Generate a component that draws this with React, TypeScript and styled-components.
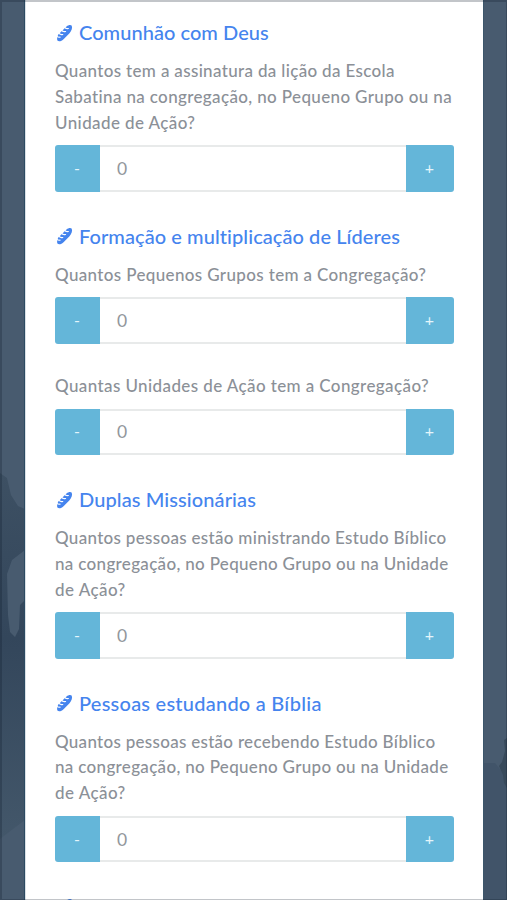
import React, { useState } from "react";
import styled, { createGlobalStyle } from "styled-components";

const GlobalStyle = createGlobalStyle`
  * { box-sizing: border-box; }
  html, body { margin: 0; height: 100%; overflow: hidden; }
  body { font-family: Lato, sans-serif; font-variant-ligatures: none; }
`;

const Page = styled.div`
  position: relative;
  height: 900px;
  display: grid;
  grid-template-columns: 25px 458px 24px;
  overflow: hidden;
  background: #485b6f;
`;

const Frame = styled.div`
  position: absolute;
  inset: 0;
  pointer-events: none;
  border: solid rgba(10, 22, 38, 0.25);
  border-width: 2px 1px 1px 2px;
`;

const Side = styled.svg`
  display: block;
  width: 100%;
  height: 900px;
`;

const Card = styled.main`
  height: 900px;
  overflow: hidden;
  padding: 20.5px 29px 0 30px;
  background: #fff;
  box-shadow: inset 1px 0 #d9e0e6;
`;

const Section = styled.section<{ $height: number }>`
  height: ${(p) => p.$height}px;
`;

const Title = styled.h2`
  display: flex;
  align-items: center;
  height: 25px;
  margin: 0 0 12.7px;
  color: #4584ee;
  font-size: 20px;
  font-weight: 500;
  line-height: 24px;
`;

const TitleIcon = styled.svg`
  width: 17px;
  height: 18px;
  margin: 0 6.5px 1px 0.5px;
  flex: none;
`;

const TitleText = styled.span<{ $spacing: number }>`
  padding-bottom: 2px;
  white-space: nowrap;
  letter-spacing: ${(p) => p.$spacing}px;
`;

const Field = styled.div`
  & + & { margin-top: 29px; }
`;

const Question = styled.label`
  display: block;
  margin-bottom: 10px;
  color: #8b9097;
  font-size: 17px;
  font-weight: 500;
  line-height: 25.7px;
`;

const Line = styled.span<{ $spacing: number }>`
  display: block;
  width: max-content;
  white-space: nowrap;
  letter-spacing: ${(p) => p.$spacing}px;
`;

const Stepper = styled.div`
  display: grid;
  grid-template-columns: 45px 1fr 48px;
  height: 46.5px;
  border-radius: 3px;
  overflow: hidden;
`;

const StepButton = styled.button`
  border: 0;
  padding: 0 1px 2px 0;
  background: #64b6d9;
  color: #e4f5fb;
  font: 16px Lato, sans-serif;
`;

const Value = styled.input`
  min-width: 0;
  width: 100%;
  border: solid #e8eaea;
  border-width: 2px 0;
  padding: 0 17px;
  outline: 0;
  background: #fff;
  color: #92979c;
  font: 17.5px Lato, sans-serif;
`;

function BreadIcon() {
  return (
    <TitleIcon viewBox="0 0 17 18" fill="none">
      <path d="M15.6 1.6C16.8 3.7 15.6 6.8 13.5 9.2L7.8 14.9C5.8 17 3 17.8 1.6 16.7C.7 15.3 1 12.7 2.3 10.5L10.5 2.5C12.2 1.1 14.6.6 15.6 1.6Z" fill="#4584ee" />
      <path d="M8.5 2.7C9.2 4.3 10.7 4.9 12.4 4.5M5.4 5.7C6.2 7.3 7.7 8 9.6 7.5M2.5 8.6C3.3 10.3 4.8 11 6.8 10.5M.4 11.6C1 12.9 2.4 13.5 4.1 13.1" stroke="#fff" strokeWidth="1.1" strokeLinecap="round" />
    </TitleIcon>
  );
}

type Text = [string, number];

const sections: { title: Text; height: number; fields: Text[][] }[] = [
  {
    title: ["Comunhão com Deus", 0.05],
    height: 203.5,
    fields: [[["Quantos tem a assinatura da lição da Escola", 0.34], ["Sabatina na congregação, no Pequeno Grupo ou na", 0.36], ["Unidade de Ação?", 0.4]]],
  },
  {
    title: ["Formação e multiplicação de Líderes", 0.07],
    height: 263.5,
    fields: [[["Quantos Pequenos Grupos tem a Congregação?", 0.36]], [["Quantas Unidades de Ação tem a Congregação?", 0.4]]],
  },
  {
    title: ["Duplas Missionárias", 0.1],
    height: 203.5,
    fields: [[["Quantos pessoas estão ministrando Estudo Bíblico", 0.31], ["na congregação, no Pequeno Grupo ou na Unidade", 0.32], ["de Ação?", 0.45]]],
  },
  {
    title: ["Pessoas estudando a Bíblia", 0.24],
    height: 203.5,
    fields: [[["Quantos pessoas estão recebendo Estudo Bíblico", 0.29], ["na congregação, no Pequeno Grupo ou na Unidade", 0.32], ["de Ação?", 0.45]]],
  },
  { title: ["Escola Pessoal", 0], height: 203.5, fields: [] },
];

function Counter() {
  const [value, setValue] = useState(0);
  return (
    <Stepper>
      <StepButton onClick={() => setValue(Math.max(0, value - 1))}>-</StepButton>
      <Value value={value} onChange={(e) => setValue(Number(e.target.value) || 0)} />
      <StepButton onClick={() => setValue(value + 1)}>+</StepButton>
    </Stepper>
  );
}

export default function App() {
  return (
    <Page>
      <GlobalStyle />
      <Side viewBox="0 0 25 900" preserveAspectRatio="none">
        <defs>
          <linearGradient id="shade" x1="0" y1="0" x2="0" y2="1">
            <stop offset="0" stopColor="#3d5063" />
            <stop offset=".45" stopColor="#33465b" />
            <stop offset="1" stopColor="#43576a" />
          </linearGradient>
        </defs>
        <path d="M0 473L7 478L11 495L18 506L25 509V820L0 839Z" fill="url(#shade)" />
        <path d="M25 550L12 560L7 574L8 615L10 632L15 637L19 629L20 605L25 600Z" fill="#485b6f" />
        <path d="M24.5 0V900" stroke="#2c4a61" />
      </Side>
      <Card>
        {sections.map((section) => (
          <Section key={section.title[0]} $height={section.height}>
            <Title>
              <BreadIcon />
              <TitleText $spacing={section.title[1]}>{section.title[0]}</TitleText>
            </Title>
            {section.fields.map((lines) => (
              <Field key={lines[0][0]}>
                <Question>
                  {lines.map(([text, spacing]) => (
                    <Line key={text} $spacing={spacing}>{text}</Line>
                  ))}
                </Question>
                <Counter />
              </Field>
            ))}
          </Section>
        ))}
      </Card>
      <Side viewBox="0 0 24 900" preserveAspectRatio="none">
        <path d="M0 763H12L24 778V900H0Z" fill="#415469" />
        <path d="M24 738L21 740L22 751L19 762L16 766L20 775L21 783L24 788Z" fill="#384a5b" />
        <path d="M.5 0V900" stroke="#3c566b" />
      </Side>
      <Frame />
    </Page>
  );
}
